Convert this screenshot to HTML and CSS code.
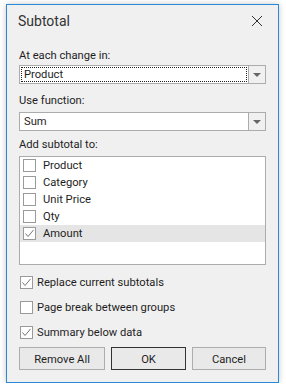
FILE: index.html
```html
<!DOCTYPE HTML>
<html lang="en">
<head>
    <meta charset="utf-8">
    <title>Subtotal</title>
    <link rel="stylesheet" href="styles.css">
</head>
<body>
    <div class="dialog">
        <div class="titlebar">
            <span class="title">Subtotal</span>
            <svg class="close" width="12" height="12" viewBox="0 0 12 12">
                <path d="M1 1 L11 11 M11 1 L1 11" stroke="#333" stroke-width="1" fill="none"/>
            </svg>
        </div>
        <div class="content">
            <div class="label">At each change in:</div>
            <div class="combo">
                <div class="combo-text"><span class="focus">Product</span></div>
                <div class="combo-btn"><span class="arrow"></span></div>
            </div>

            <div class="label label-gap">Use function:</div>
            <div class="combo combo-gap">
                <div class="combo-text"><span class="plain">Sum</span></div>
                <div class="combo-btn"><span class="arrow"></span></div>
            </div>

            <div class="label label-gap2">Add subtotal to:</div>
            <div class="listbox">
                <div class="item"><span class="box"></span>Product</div>
                <div class="item"><span class="box"></span>Category</div>
                <div class="item"><span class="box"></span>Unit Price</div>
                <div class="item"><span class="box"></span>Qty</div>
                <div class="item selected"><span class="box checked"><svg width="11" height="11" viewBox="0 0 11 11"><path d="M1.5 5.5 L4 8.5 L9.5 2" stroke="#777" stroke-width="1" fill="none"/></svg></span>Amount</div>
            </div>

            <div class="options">
                <div class="option"><span class="box checked"><svg width="11" height="11" viewBox="0 0 11 11"><path d="M1.5 5.5 L4 8.5 L9.5 2" stroke="#777" stroke-width="1" fill="none"/></svg></span>Replace current subtotals</div>
                <div class="option"><span class="box"></span>Page break between groups</div>
                <div class="option"><span class="box checked"><svg width="11" height="11" viewBox="0 0 11 11"><path d="M1.5 5.5 L4 8.5 L9.5 2" stroke="#777" stroke-width="1" fill="none"/></svg></span>Summary below data</div>
            </div>

            <div class="buttons">
                <button class="btn btn-remove">Remove All</button>
                <button class="btn btn-ok">OK</button>
                <button class="btn btn-cancel">Cancel</button>
            </div>
        </div>
    </div>
</body>
</html>
```

FILE: styles.css
```css
/* Base */
body {
    margin: 0;
    background-color: #fff;
    font-family: Roboto, "Noto Sans", sans-serif;
    font-size: 11.2px;
    color: #1e1e1e;
}
.dialog {
    margin: 4px 0 0 6px;
    width: 271px;
    height: 377px;
    border: 1px solid #2b88d8;
    background-color: #f0f0f0;
    box-shadow: 0 0 6px rgba(0, 0, 0, 0.22);
    display: flex;
    flex-direction: column;
}

/* Title bar */
.titlebar {
    height: 31px;
    display: flex;
    align-items: center;
    justify-content: space-between;
    padding: 0 15px 0 11px;
}
.title {
    font-size: 14px;
    color: #333;
    margin-top: 1px;
}

/* Content */
.content {
    padding: 11px 12px 0 12px;
    display: flex;
    flex-direction: column;
}
.label {
    height: 16px;
    line-height: 17px;
}
.label-gap {
    margin-top: 8px;
}
.label-gap2 {
    margin-top: 5px;
}

/* Combo boxes */
.combo {
    margin-top: 2px;
    height: 17px;
    border: 1px solid #acacac;
    background-color: #fff;
    display: flex;
}
.combo-gap {
    margin-top: 4px;
}
.combo-text {
    flex: 1;
    padding: 1px;
    display: flex;
}
.combo-text span {
    flex: 1;
    line-height: 14px;
    padding-left: 2px;
}
.combo-text .focus {
    border: 1px dotted #222;
}
.combo-text .plain {
    border: 1px solid transparent;
}
.combo-btn {
    width: 16px;
    border-left: 1px solid #acacac;
    background-color: #f0f0f0;
    display: flex;
    align-items: center;
    justify-content: center;
}
.arrow {
    width: 0;
    height: 0;
    border-left: 4px solid transparent;
    border-right: 4px solid transparent;
    border-top: 4px solid #666;
}

/* List box */
.listbox {
    margin-top: 4px;
    height: 107px;
    border: 1px solid #acacac;
    background-color: #fff;
}
.item {
    height: 17px;
    line-height: 18px;
    display: flex;
    align-items: center;
    padding-left: 3px;
}
.item .box {
    margin-right: 7px;
}
.item.selected {
    background-color: #e5e5e5;
}

/* Check boxes */
.box {
    width: 11px;
    height: 11px;
    border: 1px solid #9a9a9a;
    background-color: #fff;
    display: inline-flex;
    align-items: center;
    justify-content: center;
    flex-shrink: 0;
}
.options {
    margin-top: 8px;
    display: flex;
    flex-direction: column;
    gap: 7px;
}
.option {
    height: 18px;
    line-height: 19px;
    display: flex;
    align-items: center;
    padding-left: 1px;
}
.option .box {
    margin-right: 4px;
}

/* Buttons */
.buttons {
    margin-top: 6px;
    display: flex;
    gap: 6px;
}
.btn {
    height: 23px;
    padding: 1px 0 0 0;
    font-family: Roboto, "Noto Sans", sans-serif;
    font-size: 11.2px;
    color: #1e1e1e;
    background-color: #e9e9e9;
    border: 1px solid #adadad;
}
.btn-remove {
    width: 86px;
}
.btn-ok {
    width: 75px;
    border-color: #333;
}
.btn-cancel {
    width: 74px;
}
```
